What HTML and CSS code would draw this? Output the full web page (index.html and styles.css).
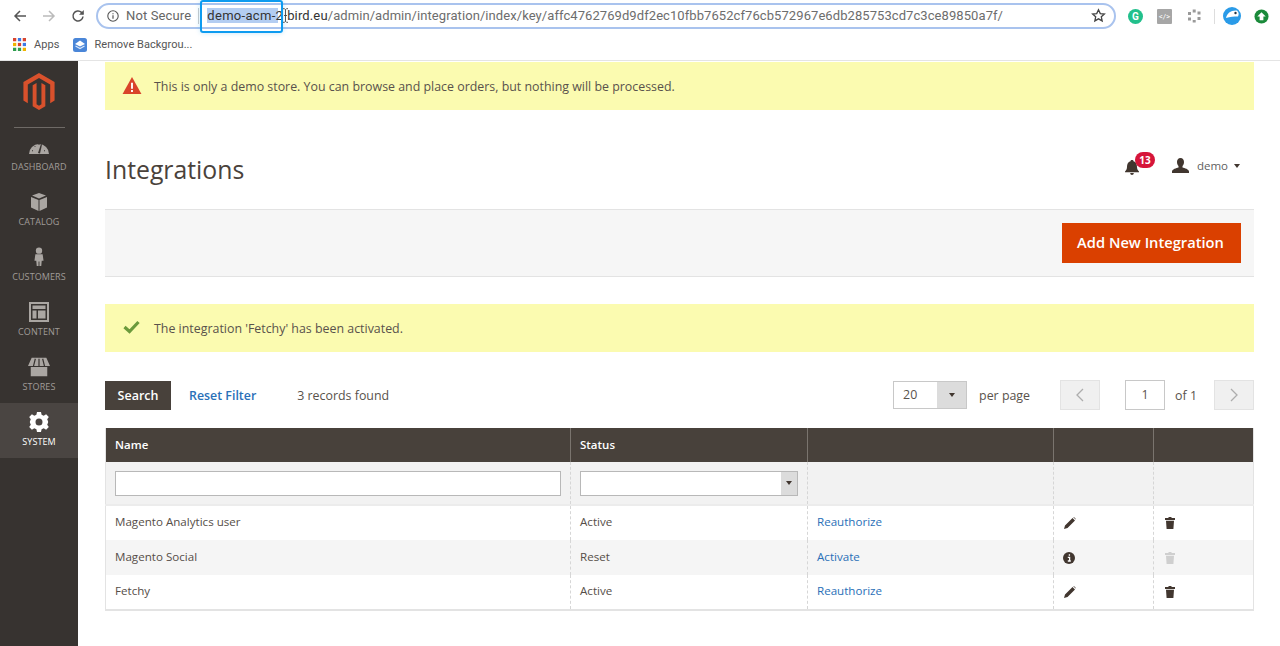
FILE: index.html
```html
<!DOCTYPE html>
<html lang="en">
<head>
<meta charset="utf-8">
<title>Integrations</title>
<link rel="stylesheet" href="styles.css">
</head>
<body>
<header class="chrome">
  <div class="toolbar">
    <div class="navs">
      <svg class="nav" viewBox="0 0 16 16"><path d="M14 8H3M8 3L3 8l5 5" fill="none" stroke="#555" stroke-width="1.5"/></svg>
      <svg class="nav" viewBox="0 0 16 16"><path d="M2 8h11M8 3l5 5-5 5" fill="none" stroke="#bbb" stroke-width="1.5"/></svg>
      <svg class="nav" viewBox="0 0 16 16"><path d="M13 8.500A5 5 0 1 1 11.500 4.400L13 6" fill="none" stroke="#555" stroke-width="1.5"/><path d="M13.800 2v4.800H9z" fill="#555"/></svg>
    </div>
    <div class="omnibox">
      <svg class="info" viewBox="0 0 14 14"><circle cx="7" cy="7" r="5.200" fill="none" stroke="#555" stroke-width="1.100"/><path d="M7 6.200v3.600M7 4.200v1.100" stroke="#555" stroke-width="1.200"/></svg>
      <span class="secure">Not Secure</span>
      <span class="sep"></span>
      <span class="url"><span class="sel">demo-acm-2</span><span class="gap"></span>bird.eu<span class="path">/admin/admin/integration/index/key/affc4762769d9df2ec10fbb7652cf76cb572967e6db285753cd7c3ce89850a7f/</span></span>
      <svg class="star" viewBox="0 0 16 16"><path d="M8 1.800l1.900 4.100 4.400.5-3.300 3 .9 4.400L8 11.600l-3.900 2.200.9-4.400-3.300-3 4.400-.5z" fill="none" stroke="#444" stroke-width="1.400"/></svg>
      <span class="highlight"></span>
      <svg class="ibeam" viewBox="0 0 7 15"><path d="M1 .7h1.500l1 1 1-1H6M3.500 1.700v11.600M1 14.300h1.500l1-1 1 1H6M2 7.500h3" fill="none" stroke="#444" stroke-width=".9"/></svg>
    </div>
    <div class="exts">
      <span class="ext ext-g">G</span>
      <span class="ext ext-code">&lt;/&gt;</span>
      <svg class="ext-svg" viewBox="0 0 16 16"><g fill="#9a9a9a"><rect x="6.700" y="1.500" width="3" height="3"/><rect x="11.500" y="3.500" width="3" height="3"/><rect x="11.500" y="9" width="3" height="3"/><rect x="6.700" y="12" width="3" height="2.500"/><rect x="2" y="9.500" width="3" height="3"/><rect x="2" y="4" width="3" height="3"/></g></svg>
      <span class="ext-sep"></span>
      <svg class="ext-svg bird" viewBox="0 0 18 18"><circle cx="9" cy="9" r="9" fill="#2a9be8"/><path d="M3 11C4 6 8 3 14 3.500c2 2 2 4 1 6-4 0-8 0-12 1.500z" fill="#fff"/><circle cx="12.500" cy="6" r="1.200" fill="#234"/></svg>
      <svg class="ext-svg up" viewBox="0 0 16 16"><circle cx="8" cy="8" r="7.500" fill="#1a8a3a"/><path d="M8 3.500L12.500 8H10v4H6V8H3.500z" fill="#fff"/></svg>
    </div>
  </div>
  <div class="bookmarks">
    <span class="bm">
      <svg class="apps" viewBox="0 0 12 12">
        <g><rect x="0" y="0" width="3" height="3" fill="#d9442f"/><rect x="4.500" y="0" width="3" height="3" fill="#3b78e7"/><rect x="9" y="0" width="3" height="3" fill="#d9442f"/><rect x="0" y="4.500" width="3" height="3" fill="#f0b400"/><rect x="4.500" y="4.500" width="3" height="3" fill="#d9442f"/><rect x="9" y="4.500" width="3" height="3" fill="#3b78e7"/><rect x="0" y="9" width="3" height="3" fill="#2f9e4f"/><rect x="4.500" y="9" width="3" height="3" fill="#2f9e4f"/><rect x="9" y="9" width="3" height="3" fill="#f0b400"/></g>
      </svg>
      Apps
    </span>
    <span class="bm">
      <svg class="rb" viewBox="0 0 14 14"><rect width="14" height="14" rx="2.500" fill="#4a86d8"/><path d="M7 2.500L12 6 7 8.500 2 6z" fill="#fff"/><path d="M2.500 8L7 10.500 11.500 8" fill="none" stroke="#dbe8fa" stroke-width="1.200"/></svg>
      Remove Backgrou...
    </span>
  </div>
</header>

<div class="app">
  <nav class="sidebar">
    <svg class="logo" viewBox="0 0 32 38"><path d="M16 0L32 9.300v19L27.500 31V11.800L16 5.200 4.500 11.800V31L0 28.300v-19z" fill="#d9512c"/><path d="M16 38l-6.500-3.800V12.500l4-2.300v22l2.500 1.500 2.500-1.500v-22l4 2.300v21.700z" fill="#d9512c"/></svg>
    <span class="logo-rule"></span>
    <a class="nav-item">
      <svg class="nav-ico" viewBox="0 0 22 20"><path d="M1 17A10 10 0 0 1 21 17z" fill="#aaa6a2"/><path d="M10 16l3-9 1 .4-2 9.100z" fill="#373330"/><path d="M4 13.500l1 .5M6.500 9l.8.8M11 7v1M17 13.500l-1 .5" stroke="#373330"/></svg>
      DASHBOARD
    </a>
    <a class="nav-item">
      <svg class="nav-ico" viewBox="0 0 22 20"><path d="M11 1l7 2.500-7 3L4 3.500zM3 5l7.500 3v11L3 15.500zM19 5l-7.500 3v11L19 15.500z" fill="#aaa6a2"/></svg>
      CATALOG
    </a>
    <a class="nav-item">
      <svg class="nav-ico" viewBox="0 0 22 22"><circle cx="11" cy="4" r="3.500" fill="#aaa6a2"/><path d="M7 8h8l1 7h-2l-.5 6h-2v-5h-1v5h-2L8 15H6z" fill="#aaa6a2"/></svg>
      CUSTOMERS
    </a>
    <a class="nav-item">
      <svg class="nav-ico" viewBox="0 0 20 20"><path d="M0 0h20v20H0zM2 2v16h16V2zM3.500 3.500h13v3.500h-13zM3.500 8.500h4v8h-4zM9 8.500h7.500v8H9z" fill="#aaa6a2" fill-rule="evenodd"/></svg>
      CONTENT
    </a>
    <a class="nav-item">
      <svg class="nav-ico" viewBox="0 0 24 20"><path d="M4 0h16l4 9H0zM3 10h18v10H3z" fill="#aaa6a2"/><path d="M8 1L6 9M12 1v8M16 1l2 8" stroke="#373330" stroke-width="1.300"/></svg>
      STORES
    </a>
    <a class="nav-item active">
      <svg class="nav-ico" viewBox="0 0 20 20"><path d="M8 0h4l.6 2.800 2.100.9L17.100 2.200 19.800 5 18.200 7.300l.9 2.100 0 1.200-.9 2.100 1.600 2.300-2.700 2.800-2.400-1.500-2.100.9L12 20H8l-.6-2.800-2.100-.9-2.400 1.500L.2 15l1.600-2.300-.9-2.100V9.400l.9-2.100L.2 5l2.700-2.800 2.400 1.500 2.100-.9zM10 6.500a3.500 3.500 0 1 0 0 7 3.500 3.500 0 0 0 0-7z" fill="#fff" fill-rule="evenodd"/></svg>
      SYSTEM
    </a>
  </nav>

  <main class="content">
    <div class="notice notice-demo">
      <svg class="warn" viewBox="0 0 20 18"><path d="M10 0l10 18H0z" fill="#d9442a"/><path d="M10 6v6.500M10 13.800v2" stroke="#fff" stroke-width="2"/></svg>
      This is only a demo store. You can browse and place orders, but nothing will be processed.
    </div>

    <div class="title-row">
      <h1>Integrations</h1>
      <div class="account">
        <span class="bell">
          <svg class="bell-ico" viewBox="0 0 14 15"><path d="M7 0c1 0 1.500.6 1.500 1.200C11 2 12 4 12 7c0 2 .7 3.200 2 4.500v.8H0v-.8C1.300 10.200 2 9 2 7c0-3 1-5 3.500-5.800C5.500.6 6 0 7 0zM5.200 13h3.600c0 1.200-.8 2-1.800 2s-1.800-.8-1.800-2z" fill="#41362f"/></svg>
          <span class="badge">13</span>
        </span>
        <svg class="user" viewBox="0 0 17 15"><path d="M8.500 0c2.300 0 3.500 1.800 3.500 4 0 1.700-.6 3.100-1.500 4v1.500c2 .6 6.500 1.700 6.500 4V15H0v-1.500c0-2.300 4.500-3.400 6.500-4V8C5.600 7.100 5 5.700 5 4c0-2.200 1.200-4 3.500-4z" fill="#41362f"/></svg>
        <span class="user-name">demo</span>
        <span class="tri"></span>
      </div>
    </div>

    <div class="actions">
      <button class="primary">Add New Integration</button>
    </div>

    <div class="notice notice-ok">
      <svg class="check" viewBox="0 0 17 14"><path d="M1.500 7l5 4.500L15.500 2" fill="none" stroke="#6b9a3c" stroke-width="3.200"/></svg>
      The integration 'Fetchy' has been activated.
    </div>

    <div class="grid-tools">
      <button class="search">Search</button>
      <a class="reset">Reset Filter</a>
      <span class="found">3 records found</span>
      <div class="pager">
        <div class="perpage"><span class="pp-value">20</span><span class="pp-arrow"><span class="tri"></span></span></div>
        <span class="pp-label">per page</span>
        <span class="page-btn"><svg viewBox="0 0 8 14"><path d="M7 1L1 7l6 6" fill="none" stroke="#adadad" stroke-width="1.300"/></svg></span>
        <span class="page-input">1</span>
        <span class="page-of">of 1</span>
        <span class="page-btn"><svg viewBox="0 0 8 14"><path d="M1 1l6 6-6 6" fill="none" stroke="#adadad" stroke-width="1.300"/></svg></span>
      </div>
    </div>

    <table class="grid">
      <colgroup><col class="c-name"><col class="c-status"><col class="c-act"><col class="c-icon"><col class="c-icon"></colgroup>
      <thead>
        <tr class="head"><th>Name</th><th>Status</th><th></th><th></th><th></th></tr>
        <tr class="filters">
          <td><span class="f-input"></span></td>
          <td><span class="f-select"><span class="pp-arrow small"><span class="tri"></span></span></span></td>
          <td></td><td></td><td></td>
        </tr>
      </thead>
      <tbody>
        <tr>
          <td>Magento Analytics user</td><td>Active</td><td><a>Reauthorize</a></td>
          <td><svg class="ico pencil" viewBox="0 0 12 12"><path d="M0 12l1-3.500L8.500 1l2.500 2.500L3.500 11zM9.300.3l.6-.3 2 2-.3.6z" fill="#41362f"/></svg></td>
          <td><svg class="ico trash" viewBox="0 0 12 12"><path d="M4.500 0h3v1H11v2H1V1h3.500zM2 3.800h8l-.6 8.200H2.600z" fill="#41362f"/></svg></td>
        </tr>
        <tr>
          <td>Magento Social</td><td>Reset</td><td><a>Activate</a></td>
          <td><svg class="ico info-i" viewBox="0 0 12 12"><circle cx="6" cy="6" r="6" fill="#41362f"/><path d="M6.400 2.300v1.400M4.800 5.300h1.800v3.500M4.800 9h3" stroke="#fff" stroke-width="1.300" fill="none"/></svg></td>
          <td><svg class="ico trash" viewBox="0 0 12 12"><path d="M4.500 0h3v1H11v2H1V1h3.500zM2 3.800h8l-.6 8.200H2.600z" fill="#cfcfcf"/></svg></td>
        </tr>
        <tr>
          <td>Fetchy</td><td>Active</td><td><a>Reauthorize</a></td>
          <td><svg class="ico pencil" viewBox="0 0 12 12"><path d="M0 12l1-3.500L8.500 1l2.500 2.500L3.500 11zM9.300.3l.6-.3 2 2-.3.6z" fill="#41362f"/></svg></td>
          <td><svg class="ico trash" viewBox="0 0 12 12"><path d="M4.500 0h3v1H11v2H1V1h3.500zM2 3.800h8l-.6 8.200H2.600z" fill="#41362f"/></svg></td>
        </tr>
      </tbody>
    </table>
  </main>
</div>
</body>
</html>
```

FILE: styles.css
```css
* { box-sizing: border-box; }
html, body { margin: 0; padding: 0; height: 646px; overflow: hidden; background: #fff; }
body { font-family: "Open Sans", "Liberation Sans", sans-serif; color: #41362f; font-size: 12.400px; }
a { color: #2a70b8; }

.chrome { height: 61px; border-bottom: 1px solid #e4e4e4; font-family: "Roboto", "Liberation Sans", sans-serif; }
.toolbar { height: 31px; display: flex; align-items: center; padding-top: 1px; }
.navs { width: 96px; flex: none; display: flex; gap: 13px; padding-left: 12px; align-items: center; }
.nav { width: 16px; height: 16px; flex: none; }
.omnibox { position: relative; flex: none; width: 1020px; height: 26px; margin-top: -1px; border: 2px solid #a9c3ee; border-radius: 13px; display: flex; align-items: center; padding-left: 8px; font-size: 13px; color: #5f5f5f; letter-spacing: .14px; }
.info { width: 14px; height: 14px; flex: none; }
.secure { margin-left: 6px; color: #666; }
.sep { width: 1px; height: 16px; background: #ccc; margin: 0 8px 0 7px; }
.url { color: #333; white-space: nowrap; flex: 1; }
.sel { letter-spacing: .3px; background: linear-gradient(#b3cdf2, #b3cdf2) no-repeat; background-size: 71px 100%; }
.gap { display: inline-block; width: 4px; }
.path { color: #6d6d6d; letter-spacing: .075px; }
.star { width: 15px; height: 15px; flex: none; margin-right: 8px; }
.highlight { position: absolute; left: 102px; top: -5px; width: 83px; height: 33px; border: 2px solid #0d9bf0; border-radius: 3px; box-shadow: 0 0 5px rgba(13,155,240,.25); }
.ibeam { position: absolute; left: 184px; top: 3px; width: 7px; height: 15px; }
.exts { flex: 1; display: flex; align-items: center; padding-left: 12px; gap: 14px; }
.ext { width: 15px; height: 15px; flex: none; display: flex; align-items: center; justify-content: center; }
.ext-g { border-radius: 50%; background: #22c08c; color: #fff; font-size: 10px; font-weight: 700; }
.ext-code { background: #a6a6a6; color: #fff; font-size: 8px; border-radius: 1px; }
.ext-svg { width: 16px; height: 16px; flex: none; }
.ext-sep { width: 1px; height: 15px; background: #ddd; margin: 0 -3px 0 -2px; }
.ext-svg.bird { width: 18px; height: 18px; margin-left: -3px; }
.ext-svg.up { width: 15px; height: 15px; margin-left: -1px; }

.bookmarks { height: 29px; display: flex; align-items: center; padding: 0 0 2px 13px; gap: 14px; font-size: 11px; color: #555; letter-spacing: .05px; }
.bm { display: flex; align-items: center; gap: 8px; }
.apps { width: 13px; height: 13px; flex: none; }
.rb { width: 14px; height: 14px; flex: none; margin-right: -1px; }

.app { display: flex; height: 585px; }
.sidebar { width: 78px; flex: none; background: #373330; display: flex; flex-direction: column; align-items: center; padding-top: 12px; }
.logo { width: 32px; height: 37px; flex: none; }
.logo-rule { width: 51px; height: 1px; background: #6e6a66; margin-top: 17px; }
.nav-item { width: 78px; height: 55px; flex: none; display: flex; flex-direction: column; align-items: center; justify-content: flex-end; padding-bottom: 10px; font-size: 9px; color: #a09c98; letter-spacing: .1px; line-height: 13px; gap: 3px; }
.nav-ico { width: 22px; height: 20px; flex: none; }
.nav-item.active { background: #4a4542; color: #fff; }

.content { flex: 1; padding: 1px 27px 0; }
.notice { display: flex; align-items: center; background: #fbfbb0; height: 48px; padding-left: 17px; color: #59524c; }
.warn { width: 20px; height: 17px; flex: none; margin-right: 12px; margin-top: -2px; }
.check { width: 17px; height: 14px; flex: none; margin-right: 14px; margin-top: -2px; }

.title-row { display: flex; align-items: center; justify-content: space-between; height: 99px; padding-top: 18px; }
h1 { margin: 0; font-size: 24.800px; font-weight: 400; color: #4a423b; line-height: 36px; }
.account { display: flex; align-items: center; padding-right: 14px; margin-top: -6px; font-size: 11.500px; color: #5f5f5f; }
.bell { position: relative; width: 16px; height: 16px; margin-right: 31px; }
.bell-ico { width: 14px; height: 15px; display: block; margin-top: 2px; }
.badge { position: absolute; left: 10px; top: -6px; width: 20px; height: 16px; border-radius: 8px; background: #d6153a; color: #fff; font-size: 10px; font-weight: 700; line-height: 16px; text-align: center; }
.user { width: 17px; height: 15px; flex: none; margin-right: 8px; }
.user-name { margin-right: 6px; }
.tri { display: inline-block; width: 0; height: 0; border-style: solid; border-width: 4px 3.500px 0; border-color: #41362f transparent transparent; }

.actions { height: 68px; background: #f6f6f6; border-top: 1px solid #e3e3e3; border-bottom: 1px solid #e3e3e3; display: flex; align-items: center; justify-content: flex-end; padding-right: 13px; }
.primary { width: 179px; height: 40px; border: 0; background: #da4000; color: #fff; font: 600 14.700px "Open Sans", sans-serif; padding: 0 2px 2px 0; }

.notice-ok { margin-top: 27px; padding-left: 18px; }

.grid-tools { display: flex; align-items: center; height: 30px; margin-top: 28px; }
.search { width: 66px; height: 29px; border: 0; background: #48413b; color: #fff; font: 600 12.500px "Open Sans", sans-serif; padding: 0; }
.reset { margin-left: 18px; font-weight: 600; font-size: 12.400px; }
.found { margin-left: 41px; color: #59524c; }
.pager { margin-left: auto; display: flex; align-items: center; color: #59524c; }
.perpage { display: flex; width: 74px; height: 28px; border: 1px solid #c8c8c8; }
.pp-value { flex: 1; padding-left: 9px; line-height: 26px; background: #fff; }
.pp-arrow { width: 29px; background: #dcdcdc; display: flex; align-items: center; justify-content: center; }
.pp-label { margin-left: 12px; margin-right: 30px; }
.page-btn { width: 40px; height: 30px; background: #f0f0f0; border: 1px solid #e3e3e3; display: flex; align-items: center; justify-content: center; }
.page-btn svg { width: 8px; height: 14px; }
.page-input { width: 40px; height: 30px; margin-left: 25px; border: 1px solid #c8c8c8; text-align: center; line-height: 28px; }
.page-of { margin-left: 10px; margin-right: 17px; }

.grid { width: 1148px; margin-top: 18px; border-collapse: collapse; table-layout: fixed; font-size: 11.600px; border-bottom: 2px solid #e3e3e3; border-right: 1px solid #e3e3e3; border-left: 1px solid #e3e3e3; color: #564e48; }
.c-name { width: 465px; }
.c-status { width: 237px; }
.c-act { width: 246px; }
.c-icon { width: 100px; }
.grid th { height: 34px; background: #48413b; color: #fff; text-align: left; font-weight: 600; font-size: 11.500px; padding: 0 0 2px 9px; border-left: 1px solid #7a746e; }
.grid th:first-child { border-left: 0; }
.grid td { padding: 0 0 3px 9px; height: 35px; border-left: 1px dashed #d6d6d6; }
.grid td:first-child { border-left: 0; }
.filters td { height: 43px; padding-bottom: 0; background: #f2f2f2; border-bottom: 2px solid #ececec; }
tbody tr:nth-child(2) td { background: #f5f5f5; }
.f-input { display: block; width: 446px; height: 25px; background: #fff; border: 1px solid #b8b8b8; }
.f-select { display: flex; justify-content: flex-end; width: 218px; height: 25px; background: #fff; border: 1px solid #b8b8b8; }
.pp-arrow.small { width: 16px; }
.ico { width: 12px; height: 12px; display: block; margin-top: 3px; }
.pencil { margin-left: 1px; }
.trash { margin-left: 1px; }
.info-i { margin-left: 0; }
```
